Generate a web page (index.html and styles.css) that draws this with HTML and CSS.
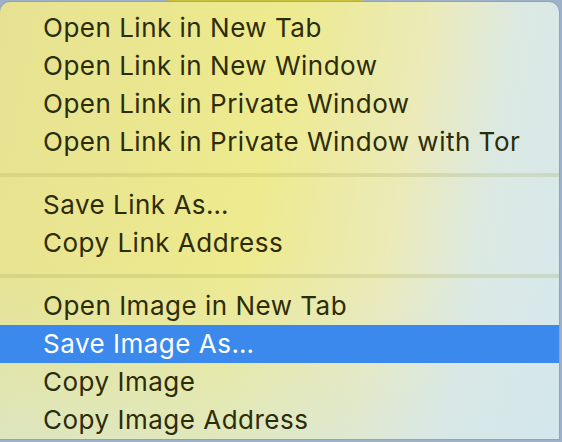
FILE: index.html
```html
<!DOCTYPE html>
<html>

<head>
  <meta charset="utf-8" />
  <title>Context menu</title>
  <link rel="stylesheet" href="styles.css">
</head>

<body>
  <div class="blob"></div>
  <div class="menu">
    <div class="item">Open Link in New Tab</div>
    <div class="item">Open Link in New Window</div>
    <div class="item">Open Link in Private Window</div>
    <div class="item">Open Link in Private Window with Tor</div>
    <div class="separator"></div>
    <div class="item">Save Link As…</div>
    <div class="item">Copy Link Address</div>
    <div class="separator"></div>
    <div class="item">Open Image in New Tab</div>
    <div class="item active">Save Image As…</div>
    <div class="item">Copy Image</div>
    <div class="item">Copy Image Address</div>
  </div>
</body>

</html>
```

FILE: styles.css
```css
html,
body {
  height: 100%;
}

body {
  margin: 0;
  padding-top: 2px;
  box-sizing: border-box;
  overflow: hidden;
  font-family: Inter, "Liberation Sans", sans-serif;
  background-color: #9db2c9;
  position: relative;
}

.blob {
  position: absolute;
  top: -30px;
  left: 150px;
  width: 230px;
  height: 40px;
  border-radius: 50%;
  background: #c9c040;
}

.menu {
  position: relative;
  width: 559px;
  padding-top: 7px;
  border-radius: 10px 10px 0 0;
  background:
    linear-gradient(180deg, rgba(220, 235, 240, 0) 60%, rgba(210, 230, 235, 0.5) 100%),
    linear-gradient(100deg, #e6e292 0%, #eeea8e 45%, #ebeab8 68%, #dce9e2 82%, #d6e8ee 100%);
  box-shadow: 0 0 0 1px rgba(120, 140, 160, 0.35);
}

.item {
  height: 38px;
  line-height: 38px;
  padding-left: 43px;
  font-size: 26px;
  letter-spacing: 0.5px;
  color: #2d2c08;
  white-space: nowrap;
}

.item.active {
  background-color: #3c89ee;
  color: #ffffff;
}

.separator {
  height: 4px;
  margin: 12px 0 9px;
  background: rgba(160, 160, 80, 0.22);
}
```
